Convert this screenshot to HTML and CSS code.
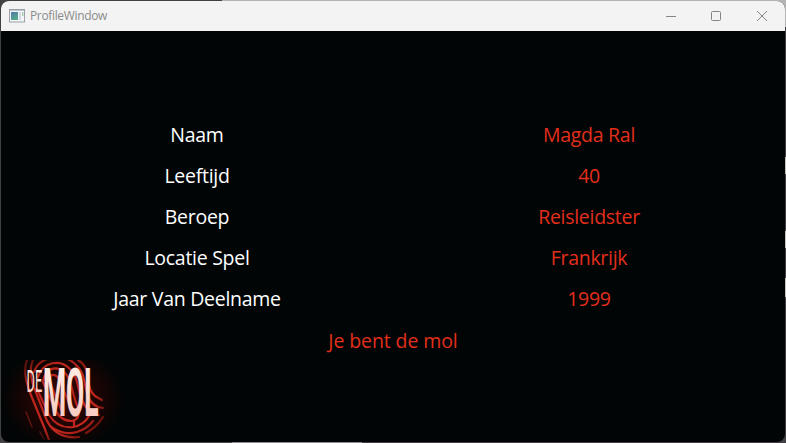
FILE: index.html
```
<!DOCTYPE html>
<html lang="nl">
<head>
<meta charset="utf-8">
<title>ProfileWindow</title>
<link rel="stylesheet" href="styles.css">
</head>
<body>
<div class="window">
  <header class="titlebar">
    <svg class="app-icon" width="16" height="14" viewBox="0 0 16 14">
      <defs><linearGradient id="pane" x2="0.4" y2="1"><stop stop-color="#4f79ad"/><stop offset="1" stop-color="#56a988"/></linearGradient></defs>
      <rect x=".5" y=".5" width="15" height="12.5" fill="#f3f5f7" stroke="#9ca2a8"/>
      <path d="M1 1.5h14" stroke="#bcc6d0"/>
      <rect x="2" y="3" width="7" height="8" fill="url(#pane)"/>
      <rect x="10" y="3" width="2" height="8" fill="#d1dbe5"/>
      <rect x="13" y="3" width="1.5" height="4" fill="#a8d0b2"/>
    </svg>
    <span class="title">ProfileWindow</span>
    <svg class="controls" width="102" height="12" viewBox="0 0 102 12" fill="none" stroke="#858585">
      <path d="M0 6.5h10"/>
      <rect x="45.5" y="1.5" width="9" height="9" rx="1"/>
      <path d="M91 1l10 10M101 1L91 11"/>
    </svg>
  </header>
  <main class="content">
    <dl class="profile">
      <dt>Naam</dt><dd>Magda Ral</dd>
      <dt>Leeftijd</dt><dd>40</dd>
      <dt>Beroep</dt><dd>Reisleidster</dd>
      <dt>Locatie Spel</dt><dd>Frankrijk</dd>
      <dt>Jaar Van Deelname</dt><dd>1999</dd>
    </dl>
    <p class="verdict">Je bent de mol</p>
    <svg class="logo" width="124" height="80" viewBox="0 0 124 80">
      <defs>
        <clipPath id="frame"><rect width="124" height="80"/></clipPath>
        <radialGradient id="glow"><stop stop-color="#3d0703"/><stop offset=".65" stop-color="#160403"/><stop offset="1" stop-color="#010506"/></radialGradient>
        <radialGradient id="ridge" gradientUnits="userSpaceOnUse" cx="60" cy="38" r="48"><stop stop-color="#a81c15"/><stop offset=".7" stop-color="#c2271e"/><stop offset="1" stop-color="#5a100a"/></radialGradient>
        <linearGradient id="letters" x2="0" y2="1"><stop stop-color="#fff6ef"/><stop offset="1" stop-color="#f8c2b5"/></linearGradient>
      </defs>
      <g clip-path="url(#frame)">
        <ellipse cx="62" cy="38" rx="62" ry="52" fill="url(#glow)"/>
        <g fill="none" stroke="url(#ridge)" stroke-width="2.2" stroke-linecap="round">
          <path d="M26 0C21 12 27 28 32 40L41 62Q44 69 48 80"/>
          <path d="M32 0C26 12 33 28 38 40L44 56C49 70 60 79 78 77"/>
          <path d="M33 12C38-3 60-8 73 3S82 24 87 36Q91 47 102 48"/>
          <path d="M37 17C42 1 60-1 69 9S76 28 81 40Q87 54 98 55"/>
          <path d="M42 22C44 8 55 5 63 12S70 31 77 48Q80 59 71 61Q59 61 54 49L42 22"/>
          <path d="M47 21C50 10 58 15 61 26L71 50"/>
          <path d="M50 25L62 54"/>
          <path d="M36 29L48 55Q57 69 72 67Q83 65 88 56"/>
          <path d="M49 66Q62 76 76 72Q86 69 92 61"/>
          <path d="M77 0Q86 5 87 18T94 36L101 40"/>
          <path d="M85 73Q96 67 102 57M73 60V66"/>
          <path d="M25 52L31 67M39 72L43 79" stroke-width="1.5" opacity=".55"/>
        </g>
      </g>
      <g class="wordmark" fill="url(#letters)" stroke="url(#letters)">
        <text class="article" transform="translate(25.6 32) scale(.4 1)" font-size="32" stroke-width="0">DE</text>
        <text transform="translate(42 56) scale(.4 1)" font-size="66" stroke-width=".2">MOL</text>
      </g>
    </svg>
  </main>
</div>
</body>
</html>
```
FILE: styles.css
```
* { box-sizing: border-box; }
body {
  margin: 0;
  height: 443px;
  overflow: hidden;
  background:
    linear-gradient(#c4c4bf, #c4c4bf) 785px 157px / 1px 17px no-repeat,
    linear-gradient(#c4c4bf, #c4c4bf) 785px 231px / 1px 17px no-repeat,
    linear-gradient(#c4c4bf, #c4c4bf) 785px 278px / 1px 19px no-repeat,
    linear-gradient(#b4b4b4, #b4b4b4) 222px 0 / 564px 27px no-repeat,
    linear-gradient(90deg, #494749 232px, #918c91 232px 362px, #443c43 362px) 0 442px / 786px 1px no-repeat,
    #414042;
  font-family: "Open Sans", "Noto Sans", sans-serif;
}
.window {
  display: flex;
  flex-direction: column;
  width: 784px;
  height: 441px;
  margin: 1px;
  border-radius: 8px;
  overflow: hidden;
  background: #010506;
}
.titlebar {
  display: flex;
  flex: 0 0 30px;
  align-items: center;
  padding: 0 17px 0 8px;
  background: #f3f3f3;
}
.title {
  margin-left: 5px;
  font-size: 12px;
  line-height: 16px;
  letter-spacing: -0.35px;
  color: #8b8b8b;
}
.controls { margin-left: auto; }
.content {
  display: flex;
  flex: 1;
  flex-direction: column;
  padding-top: 83px;
}
.profile {
  display: grid;
  grid-template-columns: 1fr 1fr;
  grid-auto-rows: 41px;
  margin: 0;
  text-align: center;
  font-size: 19.5px;
  line-height: 41px;
  letter-spacing: -0.28px;
  color: #fff;
}
.profile dd { margin: 0; color: #e32e1b; }
.verdict {
  margin: 0;
  height: 41px;
  text-align: center;
  font-size: 19.5px;
  line-height: 43px;
  letter-spacing: -0.1px;
  color: #e32e1b;
}
.logo { margin-top: auto; margin-bottom: 2px; overflow: visible; }
.wordmark { font-family: Roboto, sans-serif; font-weight: bold; }
.article { font-weight: 400; }
```
